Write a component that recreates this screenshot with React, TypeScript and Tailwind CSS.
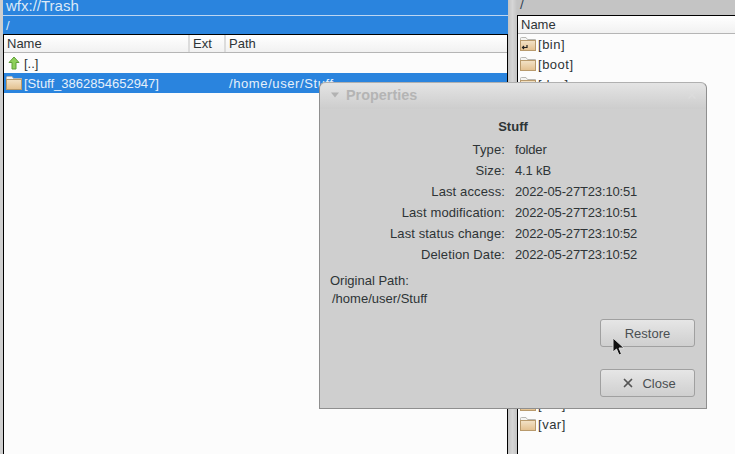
import { X } from "lucide-react";

function Folder({ link }: { link?: boolean }) {
  return (
    <svg width="16" height="14" viewBox="0 0 16 14" className="shrink-0">
      <defs>
        <linearGradient id="fold" x1="0" y1="0" x2="0" y2="1">
          <stop offset="0" stopColor="#f3e3c8" />
          <stop offset="1" stopColor="#e3c08e" />
        </linearGradient>
      </defs>
      <path d="M0.5 3.5V1.5Q0.5 0.5 1.5 0.5H6L7.5 2.5H15.5V3.5Z" fill="#f4f4f2" stroke="#b8b8b4" />
      <rect x="0.5" y="3.5" width="15" height="10" fill="url(#fold)" stroke="#b89a6c" />
      {link && <path d="M7 8V10.5H2.5M4 9L2.5 10.5L4 12" fill="none" stroke="#222" strokeWidth="1.2" />}
    </svg>
  );
}

function DirRow({ name, link }: { name: string; link?: boolean }) {
  return (
    <div className="flex h-5 shrink-0 items-center gap-[2px] pl-[2px]">
      <Folder link={link} />
      <span className="tracking-[0.5px]">[{name}]</span>
    </div>
  );
}

const props = [
  ["Type:", "folder"],
  ["Size:", "4.1 kB"],
  ["Last access:", "2022-05-27T23:10:51"],
  ["Last modification:", "2022-05-27T23:10:51"],
  ["Last status change:", "2022-05-27T23:10:52"],
  ["Deletion Date:", "2022-05-27T23:10:52"],
];

export default function App() {
  return (
    <div className="relative flex h-[454px] w-[735px] overflow-hidden bg-[#cfcfcf] font-['Liberation_Sans',Arial,sans-serif] text-[13px] leading-none text-[#2e3436]">
      {/* left panel */}
      <div className="ml-[3px] flex w-[505px] shrink-0 flex-col">
        <div className="h-4 overflow-hidden border-b border-[#bcd6f2] bg-[#2a84de] pl-[3px] text-[15px] leading-[11px] text-[#dce9f7]">wfx://Trash</div>
        <div className="flex h-[18px] items-center bg-[#2a84de] pl-[3px] text-[#dce9f7]">/</div>
        <div className="flex flex-1 flex-col border-x border-t border-black bg-[#fcfcfc]">
          <div className="flex h-[18px] shrink-0 items-center border-b border-[#b5b5b5] bg-gradient-to-b from-white to-[#f1f1f1]">
            <span className="w-[186px] border-r-2 border-[#dcdcdc] pl-[3px] leading-[17px]">Name</span>
            <span className="w-[36px] border-r-2 border-[#dcdcdc] pl-[3px] leading-[17px]">Ext</span>
            <span className="pl-[3px] leading-[17px]">Path</span>
          </div>
          <div className="flex h-5 items-center gap-[2px] pl-[2px]">
            <svg width="16" height="14" viewBox="0 0 16 14" className="shrink-0">
              <path d="M8 1L13 6.5H10V13H6V6.5H3Z" fill="#8ed05a" stroke="#5f9e38" />
            </svg>
            <span>[..]</span>
          </div>
          <div className="flex h-5 items-center gap-[2px] bg-[#2a84de] pl-[2px] text-[#e6f0fa]">
            <Folder />
            <span className="w-[203px] whitespace-nowrap">[Stuff_3862854652947]</span>
            <span className="whitespace-nowrap tracking-[0.6px]">/home/user/Stuff</span>
          </div>
        </div>
      </div>

      {/* splitter */}
      <div className="w-[9px] shrink-0 bg-gradient-to-r from-[#c4c4c4] via-[#d6d6d6] to-[#c4c4c4]" />

      {/* right panel */}
      <div className="flex flex-1 flex-col overflow-hidden">
        <div className="h-[15px] shrink-0 overflow-hidden bg-[#c4c4c4] pl-[3px] leading-[9px] text-[#2a3a50]">/</div>
        <div className="flex flex-1 flex-col border-t border-l border-black bg-[#fcfcfc]">
          <div className="flex h-[18px] shrink-0 items-center border-b border-[#b5b5b5] bg-gradient-to-b from-white to-[#f1f1f1] pl-[3px]">Name</div>
          <DirRow name="bin" link />
          <DirRow name="boot" />
          <DirRow name="dev" />
          <div className="h-[300px] shrink-0" />
          <DirRow name="usr" />
          <DirRow name="var" />
        </div>
      </div>

      {/* properties dialog */}
      <div className="absolute left-[319px] top-[82px] flex h-[327px] w-[388px] flex-col rounded-t-[6px] border border-[#8f8f8f] border-t-[#b0b0b0] bg-[#cfcfcf]">
        <div className="flex h-[26px] shrink-0 items-center rounded-t-[6px] bg-gradient-to-b from-[#e4e4e4] to-[#cdcdcd] pb-[2px] pl-[9px] pr-[8px]">
          <svg width="12" height="8" viewBox="0 0 12 8" className="shrink-0">
            <path d="M2 1.5H10L6 6.5Z" fill="#b2b2b2" />
          </svg>
          <span className="ml-[5px] text-[14.4px] font-bold text-[#b4b4b4]">Properties</span>
          <X size={12} strokeWidth={3} className="ml-auto text-[#dcdcdc]" />
        </div>
        <div className="mt-[11px] text-center font-bold text-[#2e3436]">Stuff</div>
        <div className="mt-[6px] flex flex-col">
          {props.map(([label, value]) => (
            <div key={label} className="flex h-[21px] items-center">
              <span className="w-[185px] text-right tracking-[0.12px]">{label}</span>
              <span className="ml-[10px] tracking-[-0.15px]">{value}</span>
            </div>
          ))}
        </div>
        <div className="ml-[10px] mt-[7px] leading-[18px]">Original Path:</div>
        <div className="ml-[12px] leading-[18px]">/home/user/Stuff</div>
        <div className="mr-[11px] mt-[11px] flex flex-col items-end gap-[22px]">
          <button className="flex h-[28px] w-[95px] items-center justify-center rounded-[3px] border border-[#a0a0a0] bg-gradient-to-b from-[#e6e6e6] to-[#cfcfcf] text-[#4a4f52]">Restore</button>
          <button className="flex h-[28px] w-[95px] items-center justify-center gap-[7px] rounded-[3px] border border-[#a0a0a0] bg-gradient-to-b from-[#e6e6e6] to-[#cfcfcf] pl-[2px] text-[#4a4f52]">
            <X size={14} strokeWidth={3} className="text-[#555]" />
            Close
          </button>
        </div>
      </div>

      {/* mouse cursor */}
      <svg width="13" height="20" viewBox="0 0 13 20" className="absolute left-[612px] top-[337px]">
        <path d="M1 1V15L4.5 12L7 18L9.5 17L7 11H12Z" fill="#111" stroke="#ddd" strokeWidth="1" />
      </svg>
    </div>
  );
}
